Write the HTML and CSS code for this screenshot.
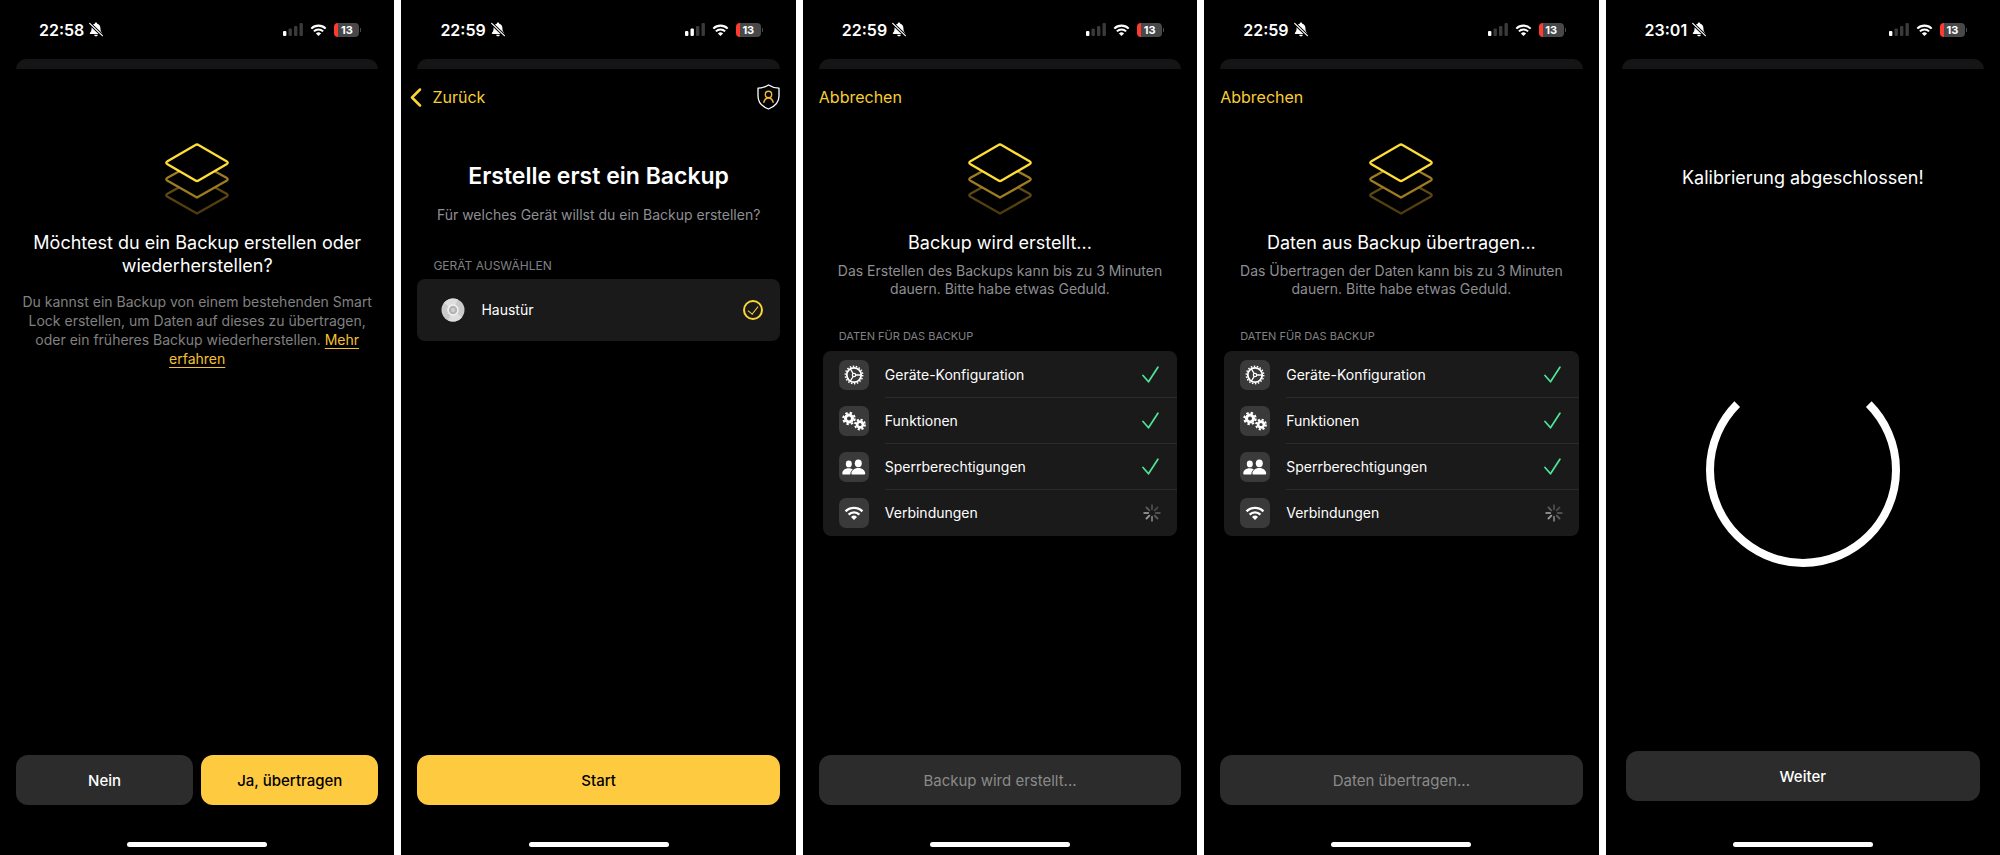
FILE: index.html
```html
<!DOCTYPE html>
<html lang="de">
<head>
<meta charset="utf-8">
<meta name="viewport" content="width=device-width, initial-scale=1">
<title>Smart Lock Backup</title>
<link rel="stylesheet" href="styles.css">
</head>
<body>
<svg class="sprite" aria-hidden="true">
  <symbol id="bell" viewBox="0 0 14 15">
    <path fill="#fff" d="M7 .6c.7 0 1.200.5 1.200 1.100 2 .5 3.200 2.100 3.200 4.300 0 2.900.8 3.900 1.600 4.700.4.500.2 1.200-.5 1.200H1.500c-.7 0-.9-.7-.5-1.200.8-.8 1.600-1.800 1.600-4.700 0-2.200 1.200-3.800 3.200-4.300C5.800 1.100 6.300.6 7 .6zM5.200 12.700h3.600c-.1 1-.9 1.600-1.800 1.600s-1.700-.6-1.800-1.600z"/>
    <path stroke="#000" stroke-width="3" d="M0 .8l14 13.400"/>
    <path stroke="#fff" stroke-width="1.200" stroke-linecap="round" d="M.7 1.400l12.700 12.200"/>
  </symbol>
  <symbol id="wifi" viewBox="0 0 18 13">
    <path fill="none" stroke="#fff" stroke-width="2.200" d="M1.200 5a11 11 0 0 1 15.600 0M4 8a7 7 0 0 1 10 0"/>
    <path fill="#fff" d="M6.200 10.200a4 4 0 0 1 5.600 0L9 13z"/>
  </symbol>
  <symbol id="signal" viewBox="0 0 20 13">
    <rect class="bar-1" x="0" y="8" width="3.400" height="5" rx="1"/>
    <rect class="bar-2" x="5.500" y="5.500" width="3.400" height="7.500" rx="1"/>
    <rect class="bar-off" x="11" y="3" width="3.400" height="10" rx="1"/>
    <rect class="bar-off" x="16.500" y="0" width="3.400" height="13" rx="1"/>
  </symbol>
  <symbol id="layers" viewBox="0 0 64 72">
    <linearGradient id="fade" x1="0" y1="0" x2="0" y2="1">
      <stop offset="0" stop-color="#6b5216"/><stop offset="1" stop-color="#4d390c"/>
    </linearGradient>
    <g stroke-width="2.300" stroke-linejoin="round" fill="#000">
      <path stroke="url(#fade)" d="M32 34.500L61.500 50.800Q64 52.300 61.500 53.800L32 70.500 2.500 53.800Q0 52.300 2.500 50.800z"/>
      <path stroke="#9e7c20" d="M32 18.500L61.500 34.800Q64 36.300 61.500 37.800L32 54.500 2.500 37.800Q0 36.300 2.500 34.800z"/>
      <path stroke="#ffdf35" d="M30.500 2Q32 1 33.500 2L61.500 18.200Q64 19.700 61.500 21.200L33.500 37.500Q32 38.500 30.500 37.500L2.500 21.200Q0 19.700 2.500 18.200z"/>
    </g>
  </symbol>
  <symbol id="check" viewBox="0 0 17 17">
    <path fill="none" stroke="#4fe596" stroke-width="1.700" stroke-linecap="round" stroke-linejoin="round" d="M1 9.500l5.500 6.300L15.900 1.200"/>
  </symbol>
  <symbol id="spinner" viewBox="0 0 18 18">
    <g stroke-width="1.900" stroke-linecap="round">
      <path stroke="#4a4a4c" d="M9 1.200v4"/>
      <path stroke="#47474a" d="M14.500 3.500l-2.800 2.800"/>
      <path stroke="#505052" d="M16.800 9h-4"/>
      <path stroke="#5a5a5c" d="M14.500 14.500l-2.800-2.800"/>
      <path stroke="#77777a" d="M9 16.800v-4"/>
      <path stroke="#98989b" d="M3.500 14.500l2.800-2.800"/>
      <path stroke="#88888b" d="M1.200 9h4"/>
      <path stroke="#5a5a5c" d="M3.500 3.500l2.800 2.800"/>
    </g>
  </symbol>
  <symbol id="gear" viewBox="0 0 30 30">
    <g fill="none" stroke="#fff">
      <circle cx="15" cy="15" r="7.200" stroke-width="1.800"/>
      <circle cx="15" cy="15" r="8.700" stroke-width="1.500" stroke-dasharray="1.500 1.537"/>
      <circle cx="15" cy="15" r="1.700" stroke-width="1.200"/>
      <path stroke-width="1.400" d="M16.700 15h5.500M14.100 13.500l-3-5M14.100 16.500l-3 5"/>
    </g>
  </symbol>
  <symbol id="gears" viewBox="0 0 30 30">
    <g fill="none" stroke="#fff">
      <circle cx="10" cy="12.500" r="3.500" stroke-width="3"/>
      <circle cx="10" cy="12.500" r="5.700" stroke-width="2" stroke-dasharray="2.400 2.077"/>
      <circle cx="21" cy="18.500" r="2.900" stroke-width="2.600"/>
      <circle cx="21" cy="18.500" r="4.900" stroke-width="2" stroke-dasharray="2.100 1.748"/>
    </g>
  </symbol>
  <symbol id="people" viewBox="0 0 30 30">
    <g fill="#fff">
      <ellipse cx="9.800" cy="11.900" rx="3" ry="3.400"/>
      <path d="M3.300 21.500c0-3 2.700-5.200 6.300-5.200 1.700 0 3.100.4 4.200 1.200-1.700 1.200-2.500 2.900-2.500 5H4.300c-.7 0-1-.4-1-1z"/>
      <ellipse cx="19.300" cy="11.300" rx="3.500" ry="3.900"/>
      <path d="M12.400 21.600c0-3 2.800-5.600 6.900-5.600s6.900 2.600 6.900 5.600c0 .6-.4 1-1.100 1H13.500c-.7 0-1.100-.4-1.100-1z"/>
    </g>
  </symbol>
</svg>

<main class="gallery">

  <section class="phone">
    <header class="status">
      <span class="time">22:58</span><svg class="bell"><use href="#bell"/></svg>
      <svg class="signal"><use href="#signal"/></svg>
      <svg class="wifi"><use href="#wifi"/></svg>
      <span class="battery">13</span>
    </header>
    <div class="sheet-edge"></div>
    <nav class="nav"></nav>
    <div class="content">
      <svg class="layers"><use href="#layers"/></svg>
      <h2 class="title">Möchtest du ein Backup erstellen oder wiederherstellen?</h2>
      <p class="text text-intro">Du kannst ein Backup von einem bestehenden Smart Lock erstellen, um Daten auf dieses zu übertragen, oder ein früheres Backup wiederherstellen. <a href="#mehr">Mehr erfahren</a></p>
    </div>
    <footer class="actions">
      <button class="btn" type="button">Nein</button>
      <button class="btn btn-primary" type="button">Ja, übertragen</button>
    </footer>
    <div class="home-bar"></div>
  </section>

  <section class="phone">
    <header class="status">
      <span class="time">22:59</span><svg class="bell"><use href="#bell"/></svg>
      <svg class="signal signal-two"><use href="#signal"/></svg>
      <svg class="wifi"><use href="#wifi"/></svg>
      <span class="battery">13</span>
    </header>
    <div class="sheet-edge"></div>
    <nav class="nav nav-back">
      <button class="nav-btn" type="button">
        <svg class="chevron" viewBox="0 0 12 19"><path fill="none" stroke="#fcd535" stroke-width="2.500" stroke-linecap="round" stroke-linejoin="round" d="M10 1.500L2 9.500l8 8"/></svg>
        Zurück
      </button>
      <button class="nav-btn" type="button" aria-label="Konto">
        <svg class="shield" viewBox="0 0 23 26">
          <path fill="none" stroke="#fff" stroke-width="1.300" stroke-linejoin="round" d="M11.500 1C8.500 3 5 4 1 4.200V12c0 6.200 4 10.500 10.500 13C18 22.500 22 18.200 22 12V4.200C18 4 14.500 3 11.500 1z"/>
          <g fill="none" stroke="#f0b92e" stroke-width="1.400" stroke-linecap="round"><circle cx="11.500" cy="10.500" r="3.200"/><path d="M6.800 18.200c.7-2.600 2.400-4.200 4.700-4.500 2.300.3 4 1.900 4.700 4.500"/></g>
        </svg>
      </button>
    </nav>
    <div class="content content-pick">
      <h1 class="headline">Erstelle erst ein Backup</h1>
      <p class="text">Für welches Gerät willst du ein Backup erstellen?</p>
      <h3 class="caption">GERÄT AUSWÄHLEN</h3>
      <label class="device">
        <svg class="lock" viewBox="0 0 24 24">
          <circle cx="12" cy="12" r="11.500" fill="#cacaca"/>
          <path fill="#dedede" d="M12 12L3 4.800A11.500 11.500 0 0 1 17 1.600zM12 12l9 7.200A11.500 11.500 0 0 1 7 22.400z"/>
          <circle cx="12" cy="12" r="5" fill="#b4b4b4" stroke="#f4f4f4" stroke-width="1.500"/>
          <circle cx="12" cy="12" r="2" fill="#cfcfcf"/>
        </svg>
        <span class="label">Haustür</span>
        <input class="radio" type="radio" name="device" checked>
      </label>
    </div>
    <footer class="actions">
      <button class="btn btn-primary" type="button">Start</button>
    </footer>
    <div class="home-bar"></div>
  </section>

  <section class="phone">
    <header class="status">
      <span class="time">22:59</span><svg class="bell"><use href="#bell"/></svg>
      <svg class="signal"><use href="#signal"/></svg>
      <svg class="wifi"><use href="#wifi"/></svg>
      <span class="battery">13</span>
    </header>
    <div class="sheet-edge"></div>
    <nav class="nav"><button class="nav-btn" type="button">Abbrechen</button></nav>
    <div class="content">
      <svg class="layers"><use href="#layers"/></svg>
      <h2 class="title">Backup wird erstellt...</h2>
      <p class="text text-wait">Das Erstellen des Backups kann bis zu 3 Minuten dauern. Bitte habe etwas Geduld.</p>
      <h3 class="caption caption-list">DATEN FÜR DAS BACKUP</h3>
      <ul class="list">
        <li><svg class="tile"><use href="#gear"/></svg><div class="row"><span class="label">Geräte-Konfiguration</span><svg class="check"><use href="#check"/></svg></div></li>
        <li><svg class="tile"><use href="#gears"/></svg><div class="row"><span class="label">Funktionen</span><svg class="check"><use href="#check"/></svg></div></li>
        <li><svg class="tile"><use href="#people"/></svg><div class="row"><span class="label">Sperrberechtigungen</span><svg class="check"><use href="#check"/></svg></div></li>
        <li><svg class="tile tile-wifi"><use href="#wifi"/></svg><div class="row"><span class="label">Verbindungen</span><svg class="spinner"><use href="#spinner"/></svg></div></li>
      </ul>
    </div>
    <footer class="actions">
      <button class="btn" type="button" disabled>Backup wird erstellt...</button>
    </footer>
    <div class="home-bar"></div>
  </section>

  <section class="phone">
    <header class="status">
      <span class="time">22:59</span><svg class="bell"><use href="#bell"/></svg>
      <svg class="signal"><use href="#signal"/></svg>
      <svg class="wifi"><use href="#wifi"/></svg>
      <span class="battery">13</span>
    </header>
    <div class="sheet-edge"></div>
    <nav class="nav"><button class="nav-btn" type="button">Abbrechen</button></nav>
    <div class="content">
      <svg class="layers"><use href="#layers"/></svg>
      <h2 class="title">Daten aus Backup übertragen...</h2>
      <p class="text text-wait">Das Übertragen der Daten kann bis zu 3 Minuten dauern. Bitte habe etwas Geduld.</p>
      <h3 class="caption caption-list">DATEN FÜR DAS BACKUP</h3>
      <ul class="list">
        <li><svg class="tile"><use href="#gear"/></svg><div class="row"><span class="label">Geräte-Konfiguration</span><svg class="check"><use href="#check"/></svg></div></li>
        <li><svg class="tile"><use href="#gears"/></svg><div class="row"><span class="label">Funktionen</span><svg class="check"><use href="#check"/></svg></div></li>
        <li><svg class="tile"><use href="#people"/></svg><div class="row"><span class="label">Sperrberechtigungen</span><svg class="check"><use href="#check"/></svg></div></li>
        <li><svg class="tile tile-wifi"><use href="#wifi"/></svg><div class="row"><span class="label">Verbindungen</span><svg class="spinner"><use href="#spinner"/></svg></div></li>
      </ul>
    </div>
    <footer class="actions">
      <button class="btn" type="button" disabled>Daten übertragen...</button>
    </footer>
    <div class="home-bar"></div>
  </section>

  <section class="phone">
    <header class="status">
      <span class="time">23:01</span><svg class="bell"><use href="#bell"/></svg>
      <svg class="signal"><use href="#signal"/></svg>
      <svg class="wifi"><use href="#wifi"/></svg>
      <span class="battery">13</span>
    </header>
    <div class="sheet-edge"></div>
    <nav class="nav"></nav>
    <div class="content content-done">
      <h2 class="title">Kalibrierung abgeschlossen!</h2>
      <svg class="ring" viewBox="0 0 194 194" role="img" aria-label="Fortschritt"><path fill="none" stroke="#fff" stroke-width="8" d="M31.200 31.200a93 93 0 1 0 131.600 0"/></svg>
    </div>
    <footer class="actions actions-inset">
      <button class="btn" type="button">Weiter</button>
    </footer>
    <div class="home-bar"></div>
  </section>

</main>
</body>
</html>
```

FILE: styles.css
```css
* {
  box-sizing: border-box;
}

body {
  margin: 0;
  background: #fff;
  color: #fff;
  font-family: Inter, "Liberation Sans", sans-serif;
}

h1, h2, h3, p, ul {
  margin: 0;
  padding: 0;
}

button {
  border: 0;
  padding: 0;
  background: none;
  color: inherit;
  font: inherit;
}

.sprite {
  position: absolute;
  width: 0;
  height: 0;
}

.gallery {
  display: grid;
  grid-template-columns: repeat(5, 1fr);
  gap: 7px;
  min-height: 100vh;
}

.phone {
  display: flex;
  flex-direction: column;
  min-width: 0;
  background: #000;
}

/* Status bar */
.status {
  display: flex;
  align-items: center;
  height: 59px;
  padding: 0 35px 0 39px;
}

.time {
  font-size: 16px;
  font-weight: 600;
  line-height: 20px;
}

.bell {
  width: 14px;
  height: 15px;
  margin: 0 auto 0 5px;
}

.signal {
  width: 20px;
  height: 13px;
  fill: #3a3a3c;
  color: #3a3a3c;
}

.bar-1 {
  fill: #fff;
}

.bar-2 {
  fill: currentColor;
}

.signal-two {
  color: #fff;
}

.wifi {
  width: 17px;
  height: 12px;
  margin: 0 7px;
}

.battery {
  position: relative;
  width: 25px;
  height: 14px;
  border-radius: 4px;
  background: linear-gradient(90deg, #ff3b30 4px, #48484a 4px);
  font-size: 11px;
  font-weight: 700;
  line-height: 14px;
  text-align: center;
}

.battery::after {
  content: "";
  position: absolute;
  right: -2px;
  top: 5px;
  width: 1px;
  height: 4px;
  background: #48484a;
}

.sheet-edge {
  height: 10px;
  margin: 0 16px;
  border-radius: 10px 10px 0 0;
  background: #151517;
}

/* Navigation */
.nav {
  display: flex;
  align-items: center;
  justify-content: space-between;
  height: 56px;
  padding: 0 16px;
}

.nav-back {
  padding-left: 9px;
}

.nav-btn {
  display: flex;
  align-items: center;
  gap: 10px;
  color: #f8ce34;
  font-size: 16px;
  line-height: 20px;
}

.chevron {
  width: 12px;
  height: 19px;
}

.shield {
  width: 23px;
  height: 26px;
}

/* Content */
.content {
  display: flex;
  flex: 1;
  flex-direction: column;
  align-items: center;
  padding: 18px 20px 0;
}

.content-pick {
  align-items: stretch;
  padding: 36px 16px 0;
}

.content-done {
  padding-top: 41px;
}

.layers {
  width: 64px;
  height: 72px;
}

.title {
  margin-top: 16px;
  font-size: 18px;
  font-weight: 400;
  line-height: 23px;
  text-align: center;
}

.content-done .title {
  margin-top: 0;
}

.headline {
  font-size: 23px;
  font-weight: 600;
  line-height: 30px;
  text-align: center;
}

.text {
  color: #8e8e93;
  font-size: 14px;
  line-height: 18px;
  text-align: center;
}

.text-intro {
  margin-top: 15px;
  color: #808080;
  line-height: 19px;
}

.text-intro a {
  color: #f5c034;
  text-underline-offset: 3px;
}

.text-wait {
  margin-top: 8px;
}

.headline + .text {
  margin-top: 15px;
}

.caption {
  margin-top: 34px;
  padding: 0 16px;
  color: #808084;
  font-size: 12px;
  font-weight: 400;
  line-height: 16px;
}

.caption-list {
  align-self: stretch;
  margin-top: 30px;
  font-size: 11px;
}

.device {
  display: flex;
  align-items: center;
  height: 62px;
  margin-top: 5px;
  padding: 0 17px 0 24px;
  border-radius: 8px;
  background: #1a1a1a;
}

.lock {
  width: 24px;
  height: 24px;
  margin-right: 16px;
}

.label {
  flex: 1;
  font-size: 14px;
  line-height: 20px;
}

.radio {
  display: grid;
  place-items: center;
  width: 20px;
  height: 20px;
  margin: 0;
  border: 2px solid #fcd535;
  border-radius: 50%;
  appearance: none;
}

.radio:checked::after {
  content: "";
  width: 5px;
  height: 9px;
  margin-bottom: 2px;
  border: solid #fcd535;
  border-width: 0 1px 1px 0;
  transform: rotate(38deg);
}

.list {
  align-self: stretch;
  margin-top: 7px;
  padding-top: 1px;
  border-radius: 8px;
  background: #1a1a1a;
  list-style: none;
}

.list li {
  display: flex;
  align-items: center;
  gap: 16px;
  padding-left: 16px;
}

.tile {
  width: 30px;
  height: 30px;
  border-radius: 7px;
  background: #3a3a3b;
}

.tile-wifi {
  padding: 8px 5px;
}

.row {
  display: flex;
  flex: 1;
  align-items: center;
  height: 46px;
  padding-right: 16px;
  border-bottom: 1px solid #2b2b2c;
}

.list li:last-child .row {
  border-bottom: 0;
}

.check {
  width: 17px;
  height: 17px;
  margin-right: 2px;
}

.spinner {
  width: 18px;
  height: 18px;
}

.ring {
  width: 194px;
  height: 194px;
  margin-top: 184px;
}

/* Actions */
.actions {
  display: flex;
  gap: 8px;
  padding: 0 16px 37px;
}

.actions-inset {
  padding: 0 20px 41px;
}

.btn {
  flex: 1 1 0;
  height: 50px;
  border-radius: 12px;
  background: #2c2c2c;
  font-size: 15px;
  font-weight: 500;
}

.btn-primary {
  background: #fecb40;
  color: #000;
}

.btn:disabled {
  color: #8a8a8a;
  font-weight: 400;
}

.home-bar {
  align-self: center;
  width: 140px;
  height: 5px;
  margin-bottom: 8px;
  border-radius: 3px;
  background: #fff;
}
```
